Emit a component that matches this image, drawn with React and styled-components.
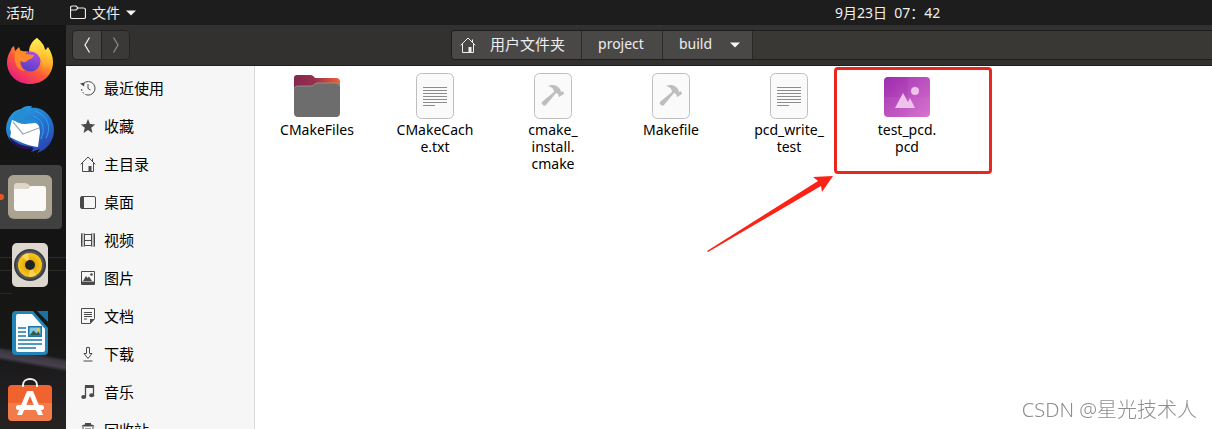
import React from "react";
import styled, { createGlobalStyle, css } from "styled-components";

const GlobalStyle = createGlobalStyle`
  *, *::before, *::after { box-sizing: border-box; }
  body {
    margin: 0;
    background: #fff;
    color: #000;
    font-family: "Noto Sans", "Noto Sans CJK SC", sans-serif;
    font-size: 14px;
  }
  button { font: inherit; color: inherit; margin: 0; padding: 0; border: 0; background: none; }
  a { color: inherit; text-decoration: none; }
  svg { display: block; flex: none; }
`;

const Screen = styled.div`
  display: flex;
  flex-direction: column;
  height: 100vh;
  overflow: hidden;
`;

const TopBar = styled.header`
  display: grid;
  grid-template-columns: 70px 1fr 377px;
  align-items: center;
  flex: none;
  height: 25px;
  background: #1d1d1d;
  color: #f0f0f0;
`;

const TopButton = styled.button`
  display: flex;
  align-items: center;
  gap: 6px;
  line-height: 24px;
  padding-left: ${(p) => (p.$inset ? "6px" : "0")};
`;

const Desktop = styled.div`
  display: flex;
  flex: 1;
  min-height: 0;
`;

const Dock = styled.nav`
  display: flex;
  flex-direction: column;
  flex: none;
  width: 66px;
  padding-top: 4px;
  gap: 4px;
  overflow: hidden;
  background:
    linear-gradient(190deg, transparent 38%, #3b3742 44%, #46414e 56%, transparent 64%) 0 314px / 66px 40px no-repeat,
    linear-gradient(#2d2d27, #2d2d27) 0 232px / 66px 1px no-repeat,
    linear-gradient(#2b2b26, #2b2b26) 0 245px / 66px 1px no-repeat,
    linear-gradient(#292925, #292925) 0 268px / 12px 1px no-repeat,
    linear-gradient(#151515 0, #141414 200px, #171716 310px, #201e21 370px, #26231f 404px);
`;

const DockItem = styled.button`
  position: relative;
  display: flex;
  align-items: center;
  justify-content: center;
  flex: none;
  width: 62px;
  height: 64px;
  padding-right: 2px;
  border-radius: 0 4px 4px 0;
  ${(p) =>
    p.$active &&
    css`
      background: #404040;
      &::before {
        content: "";
        position: absolute;
        left: -3px;
        top: 29px;
        width: 7px;
        height: 6px;
        border-radius: 3px;
        background: #e95420;
      }
    `}
`;

const Window = styled.section`
  display: flex;
  flex-direction: column;
  flex: 1;
  min-width: 0;
`;

const HeaderBar = styled.div`
  display: flex;
  align-items: center;
  flex: none;
  height: 41px;
  padding: 0 0 1px 6px;
  background: #333130;
  border-bottom: 1px solid #1f1e1e;
`;

const NavGroup = styled.div`
  display: flex;
  flex: none;
  height: 30px;
  border: 1px solid #242322;
  border-radius: 5px;
  overflow: hidden;
`;

const NavButton = styled.button`
  display: flex;
  align-items: center;
  justify-content: center;
  width: 28px;
  background: ${(p) => (p.disabled ? "#3a3938" : "#484746")};
  color: ${(p) => (p.disabled ? "#888" : "#eee")};
  & + & { border-left: 1px solid #242322; }
`;

const PathBar = styled.nav`
  display: flex;
  flex: 1;
  height: 30px;
  margin-left: 321px;
  border: 1px solid #1f1e1e;
  border-right: 0;
  border-radius: 4px 0 0 4px;
  background: #3a3835;
  overflow: hidden;
`;

const PathButton = styled.button`
  display: flex;
  align-items: center;
  gap: ${(p) => p.$gap || 0}px;
  padding: 0 ${(p) => p.$end}px 0 ${(p) => p.$start}px;
  background: #494847;
  color: #eee;
  font-size: ${(p) => p.$size || 14}px;
  border-right: 1px solid #2a2928;
`;

const Label = styled.span`
  padding-bottom: 2px;
`;

const Body = styled.div`
  display: flex;
  flex: 1;
  min-height: 0;
`;

const Sidebar = styled.nav`
  flex: none;
  width: 189px;
  padding-top: 3px;
  background: #f6f6f6;
  border-right: 1px solid #d9d9d9;
  overflow: hidden;
`;

const Place = styled.a`
  display: flex;
  align-items: center;
  gap: 8px;
  height: 38px;
  padding-left: 14px;
  font-size: 15px;
  svg { color: #4a4a4a; }
`;

const Files = styled.main`
  display: flex;
  flex: 1;
  flex-wrap: wrap;
  align-content: flex-start;
  min-width: 0;
  padding: 0 3px;
  background: #fff;
`;

const File = styled.button`
  position: relative;
  display: flex;
  flex-direction: column;
  align-items: center;
  justify-content: flex-start;
  width: 118px;
  padding-top: 6px;
`;

const FileIcon = styled.span`
  display: flex;
  align-items: center;
  height: 48px;
`;

const FileName = styled.span`
  margin-top: 1px;
  line-height: 17px;
  white-space: pre-line;
  text-align: center;
`;

const Highlight = styled.span`
  position: absolute;
  left: -14px;
  top: 1px;
  width: 158px;
  height: 107px;
  border: 3px solid #e8281f;
  border-radius: 4px;
  pointer-events: none;
`;

const Arrow = styled.svg`
  position: absolute;
  right: 100%;
  top: 109px;
  margin-right: 14px;
  pointer-events: none;
`;

const Watermark = styled.div`
  position: fixed;
  right: 15px;
  bottom: 6px;
  font-size: 20px;
  font-weight: 300;
  line-height: 26px;
  color: #8e8e8e;
`;

const Line = ({ children, size = 16, sw = 1 }) => (
  <svg width={size} height={size} viewBox="0 0 16 16" fill="none" stroke="currentColor" strokeWidth={sw} aria-hidden="true">
    {children}
  </svg>
);

const Caret = () => (
  <svg width="10" height="6" viewBox="0 0 10 6" aria-hidden="true">
    <path d="M0 .5h10L5 5.500z" fill="#f4f4f4" />
  </svg>
);

const Home = () => (
  <Line>
    <path d="M.7 8.300 8 1l7.300 7.300M2.500 7v8.500h11V7M12.500 5V2.500" />
    <path d="M8.500 10h3v5.500h-3z" fill="currentColor" stroke="none" />
  </Line>
);

const places = [
  ["最近使用", <Line><path d="M3 4A6.800 6.800 0 1 1 1.500 9" strokeDasharray="30 1.500 2 1.500 2 1.500" /><path d="M8 4v4.500l2.500 1.500" /><path d="M0 3.500l4.500-1L4 6.500z" fill="currentColor" stroke="none" /></Line>],
  ["收藏", <Line><path d="m8 1 2 5 5.200.4-4 3.400 1.300 5.100L8 12.100l-4.500 2.800 1.300-5.100-4-3.400L6 6z" fill="currentColor" stroke="none" /></Line>],
  ["主目录", <Home />],
  ["桌面", <Line><rect x=".5" y="2.500" width="15" height="12" rx="1.500" /><path d="M1 2.500h3v12H1z" fill="currentColor" stroke="none" /></Line>],
  ["视频", <Line><path d="M2.500 1.500v13M13.500 1.500v13" strokeWidth="2" strokeDasharray="1 1" /><path d="M4.500 1.500v13M11.500 1.500v13M1.500 1.500v13M14.500 1.500v13M4.500 2.500h7M4.500 8.500h7M4.500 13.500h7" /></Line>],
  ["图片", <Line><path d="M1.500 1.500h13v13h-13z" /><path d="M2 11.500h12v3H2zM3 11l3-5 1.500 2L9 6.500l3 4.500z" fill="currentColor" stroke="none" /><circle cx="11.500" cy="4.500" r="1.300" fill="currentColor" stroke="none" /></Line>],
  ["文档", <Line><path d="M1.500.5h13v10l-4 5h-9zM4 4.500h8M4 6.500h8M4 8.500h8M4 11h3" /><path d="M10 15.500V11h5z" fill="currentColor" stroke="none" /></Line>],
  ["下载", <Line><path d="M6.500 1.500h3v6h2.500L8 12.500 4 7.500h2.500zM3.500 15h9" /></Line>],
  ["音乐", <Line><path d="M5.500 12.500V2.500h8v8" strokeWidth="1.300" /><path d="M5 1h9v3H5z" fill="currentColor" stroke="none" /><ellipse cx="3.700" cy="13" rx="2.500" ry="2" fill="currentColor" stroke="none" /><ellipse cx="11.700" cy="11.300" rx="2.500" ry="2" fill="currentColor" stroke="none" /></Line>],
  ["回收站", <Line><path d="M1.500 4.500Q2 2.500 5 2.500V1h6v1.500q3 0 3.500 2z" fill="currentColor" stroke="none" /><path d="M3 5v10h10V5M6 6v7M8 6v7M10 6v7" /></Line>],
];

const Firefox = () => (
  <svg width="48" height="48" viewBox="0 0 48 48" aria-hidden="true">
    <defs>
      <linearGradient id="ffBody" x1=".85" y1=".1" x2=".25" y2=".95">
        <stop offset="0" stopColor="#fff04a" /><stop offset=".3" stopColor="#ffb52b" />
        <stop offset=".6" stopColor="#ff5b36" /><stop offset="1" stopColor="#e8207c" />
      </linearGradient>
      <linearGradient id="ffGlobe" x1=".7" y1="0" x2=".3" y2="1">
        <stop offset="0" stopColor="#b04de0" /><stop offset="1" stopColor="#5040c8" />
      </linearGradient>
      <linearGradient id="ffTail" x1=".4" y1="0" x2=".6" y2="1">
        <stop offset="0" stopColor="#fff050" /><stop offset="1" stopColor="#ffa52c" stopOpacity=".3" />
      </linearGradient>
    </defs>
    <path d="M31 1c3 3 7 6 8 12 2-1 2-2 3-3 3 5 5 9 5 15 0 13-10 22-23 22S1 38 1 25c0-5 2-9 4-12 0-1 1-3 3-4l1 5 4-4 2 5c3-1 6-1 8 0 0-6 3-11 8-14z" fill="url(#ffBody)" />
    <path d="M31 1c-5 4-8 9-7 15 10 1 15 9 12 18 8-6 7-15 3-21C38 7 34 4 31 1z" fill="url(#ffTail)" />
    <circle cx="24.500" cy="24.500" r="10" fill="url(#ffGlobe)" />
    <path d="M9 15c5-3 9-1 11 2l8 1c-1 4-5 4-7 6-2 2-4 1-7 0 0 5 2 8 5 10-7 0-12-8-10-19z" fill="#ff8a2b" />
  </svg>
);

const Thunderbird = () => (
  <svg width="48" height="48" viewBox="0 0 48 48" aria-hidden="true">
    <defs>
      <linearGradient id="tb" x1=".2" y1="0" x2=".8" y2="1">
        <stop offset="0" stopColor="#2aa0dc" /><stop offset=".5" stopColor="#2075cf" /><stop offset="1" stopColor="#2d3fae" />
      </linearGradient>
    </defs>
    <path d="M22 1 26 1 25 3C37 1 48 12 48 25c0 11-7 20-17 23l3-4-9 3 2-3C10 44 0 35 0 23 1 13 7 5 15 4c2-2 5-3 7-3z" fill="url(#tb)" />
    <path d="M3 31c5 7 13 10 23 11l2 2C14 45 5 40 3 31z" fill="#28115b" />
    <path d="M6 15c5 2 10 3 16 2 6-1 9 1 11 4l1 6-2 15c-9-1-19-5-28-10l1-4-1-5z" fill="#fff" />
    <path d="m7 17 10 12 16-6" fill="none" stroke="#9eacb6" strokeWidth="1.200" />
    <path d="M7 14c1-6 6-9 13-10-3 4-1 7-2 11 7-2 13-1 16 4-5-2-10 0-15 0-5 0-9-2-12-5z" fill="#238cd2" />
    <path d="M29 6c12 4 17 15 11 27M27 11c9 3 13 11 8 23" fill="none" stroke="#3e9ce8" strokeWidth="1" />
  </svg>
);

const FilesApp = () => (
  <svg width="46" height="46" viewBox="0 0 46 46" aria-hidden="true">
    <rect x="1" y="1" width="44" height="44" rx="6" fill="#9f9685" />
    <rect x="1" y="1" width="44" height="43" rx="6" fill="#aba392" />
    <path d="M7 12q0-3 3-3h8q3 0 5 3h13q3 0 3 3v20H7z" fill="#ddd6c9" />
    <path d="M7 15h14l3-3h12q3 0 3 3v19q0 3-3 3H10q-3 0-3-3z" fill="#faf9f7" />
  </svg>
);

const Rhythmbox = () => (
  <svg width="48" height="48" viewBox="0 0 48 48" aria-hidden="true">
    <defs>
      <radialGradient id="cone"><stop offset=".4" stopColor="#e3a90c" /><stop offset="1" stopColor="#fbc81d" /></radialGradient>
    </defs>
    <rect x="6" y="2" width="36" height="44" rx="5" fill="#dcd8cf" />
    <circle cx="24" cy="24" r="16" fill="#3b3d42" />
    <circle cx="24" cy="24" r="14" fill="#55575b" />
    <circle cx="24" cy="24" r="12" fill="url(#cone)" />
    <path d="M24 24 16 15a12 12 0 0 1 6-3zM24 24l6 10a12 12 0 0 1-7 2z" fill="#ffe06b" opacity=".7" />
    <circle cx="24" cy="24" r="5" fill="#222328" />
  </svg>
);

const Writer = () => (
  <svg width="48" height="48" viewBox="0 0 48 48" aria-hidden="true">
    <path d="M8 2h19l15 17v23q0 4-4 4H10q-4 0-4-4V6q0-4 4-4z" fill="#2384b8" />
    <path d="M31 2h11v11z" fill="#1972a2" />
    <path d="M12 5h14l13 15v21q0 2-2 2H12q-2 0-2-2V7q0-2 2-2z" fill="#fafcfd" />
    <path d="M12 19h8M12 23h8M12 27h8M12 31h24M12 35h24M12 39h18" stroke="#1c75a5" strokeWidth="1.700" />
    <path d="M22 17h14v11H22z" fill="#1c75a5" /><path d="M23.500 18.500h11v8h-11z" fill="#87c6e2" />
    <path d="m23.500 26.500 4-5 3 3 2-2 2 4z" fill="#315b48" /><circle cx="32" cy="20.500" r="1.500" fill="#edc94b" />
  </svg>
);

const Software = () => (
  <svg width="48" height="48" viewBox="0 0 48 48" aria-hidden="true">
    <path d="M2 26V12q0-4 4-4h36q4 0 4 4v14z" fill="#f0632f" />
    <path d="M2 26h44v14q0 4-4 4H6q-4 0-4-4z" fill="#f27b4b" />
    <path d="M17 10V8c0-8 14-8 14 0v2" fill="none" stroke="#f6f0e6" strokeWidth="2" />
    <path d="M21 14h6l10 24h-5l-8-19-8 19h-5z" fill="#fff" />
    <rect x="10" y="28" width="28" height="5" rx="2.500" fill="#fff" />
  </svg>
);

const dock = [
  ["Firefox", Firefox], ["Thunderbird", Thunderbird], ["文件", FilesApp],
  ["Rhythmbox", Rhythmbox], ["LibreOffice Writer", Writer], ["Ubuntu Software", Software],
];

const FolderIcon = () => (
  <svg width="48" height="48" viewBox="0 0 48 48" aria-hidden="true">
    <defs><linearGradient id="fold"><stop offset="0" stopColor="#842851" /><stop offset=".45" stopColor="#98304d" /><stop offset="1" stopColor="#ed6330" /></linearGradient></defs>
    <path d="M1 6q0-3 3-3h14q2 0 4 3h21q4 0 4 4v12H1z" fill="url(#fold)" />
    <path d="M1 17q0-3 3-3h14q2 0 4-2l1-1h20q4 0 4 4v26q0 4-4 4H5q-4 0-4-4z" fill="#6d6d6d" />
    <path d="M1.500 16q1-2 3-2H18q2 0 4-2l1-1h20q3 0 3.500 3" fill="none" stroke="#999" strokeWidth=".8" />
  </svg>
);

const Sheet = ({ children }) => (
  <svg width="40" height="48" viewBox="0 0 40 48" aria-hidden="true">
    <rect x="1.500" y="1.500" width="37" height="45" rx="5" fill="#fafafa" stroke="#bebebe" />
    {children}
  </svg>
);
const TextIcon = () => <Sheet><path d="M8 15.500h24M8 18.500h24M8 21.500h24M8 24.500h24M8 27.500h24M8 30.500h24M8 33.500h12" stroke="#8d8d8d" /></Sheet>;
const HammerIcon = () => (
  <Sheet>
    <path d="M15 14c5-2 9-1 12 3l1 3 2-1 1 3-5 3-1-3-2-1-10 12c-1 1-2 1-3 0l-1-1c-1-1 0-2 1-3l11-9c0-3-2-5-6-6z" fill="#bebebe" />
  </Sheet>
);
const ImageIcon = () => (
  <svg width="48" height="48" viewBox="0 0 48 48" aria-hidden="true">
    <defs><linearGradient id="img" x1="0" y1="0" x2="1" y2="1"><stop offset="0" stopColor="#9c2caf" /><stop offset="1" stopColor="#d467ca" /></linearGradient></defs>
    <rect x="1" y="5" width="46" height="40" rx="4" fill="url(#img)" />
    <path d="M25 5h18q4 0 4 4v16H25zM1 25h24v20H5q-4 0-4-4z" fill="#fff" opacity=".05" />
    <path d="M25 25h22v16q0 4-4 4H25z" fill="#fff" opacity=".08" />
    <path d="m12 36 8-15 5 9 2-4 5 10z" fill="#eec3eb" /><circle cx="32" cy="19" r="4" fill="#eec3eb" />
  </svg>
);

const files = [
  ["CMakeFiles", FolderIcon], ["CMakeCach\ne.txt", TextIcon], ["cmake_\ninstall.\ncmake", HammerIcon],
  ["Makefile", HammerIcon], ["pcd_write_\ntest", TextIcon], ["test_pcd.\npcd", ImageIcon, true],
];

export default function App() {
  return (
    <Screen>
      <GlobalStyle />
      <TopBar>
        <TopButton $inset>活动</TopButton>
        <TopButton>
          <Line><path d="M.5 12V3Q.5 1 2.500 1H6l2 2h5.500q2 0 2 2v7q0 1.500-1.500 1.500H2Q.5 13.500.5 12zM.5 5H6l2-2" stroke="#eee" strokeWidth="1.200" /></Line>
          文件 <Caret />
        </TopButton>
        <TopButton>9月23日&nbsp; 07：42</TopButton>
      </TopBar>
      <Desktop>
        <Dock aria-label="Dock">
          {dock.map(([name, Icon]) => (
            <DockItem key={name} aria-label={name} $active={name === "文件"}><Icon /></DockItem>
          ))}
        </Dock>
        <Window>
          <HeaderBar>
            <NavGroup>
              <NavButton aria-label="后退"><Line><path d="M10.500.5 6 8l4.500 7.500" strokeWidth="1.300" /></Line></NavButton>
              <NavButton aria-label="前进" disabled><Line><path d="M5.500.5 10 8l-4.500 7.500" strokeWidth="1.300" /></Line></NavButton>
            </NavGroup>
            <PathBar aria-label="路径">
              <PathButton $size={15} $start={8} $end={16} $gap={14}><Home /><Label>用户文件夹</Label></PathButton>
              <PathButton $start={16} $end={18}><Label>project</Label></PathButton>
              <PathButton $start={16} $end={12} $gap={18}><Label>build</Label><Caret /></PathButton>
            </PathBar>
          </HeaderBar>
          <Body>
            <Sidebar aria-label="位置">
              {places.map(([name, icon]) => <Place key={name} href="#">{icon}<Label>{name}</Label></Place>)}
            </Sidebar>
            <Files>
              {files.map(([name, Icon, marked]) => (
                <File key={name}>
                  <FileIcon><Icon /></FileIcon>
                  <FileName>{name}</FileName>
                  {marked && <Highlight />}
                  {marked && (
                    <Arrow width="128" height="78" viewBox="0 0 128 78" aria-hidden="true">
                      <path d="M1 76 112 6l-5-4 20-1-11 16-1-6L2 77z" fill="#fb2316" />
                    </Arrow>
                  )}
                </File>
              ))}
            </Files>
          </Body>
        </Window>
      </Desktop>
      <Watermark>CSDN @星光技术人</Watermark>
    </Screen>
  );
}
